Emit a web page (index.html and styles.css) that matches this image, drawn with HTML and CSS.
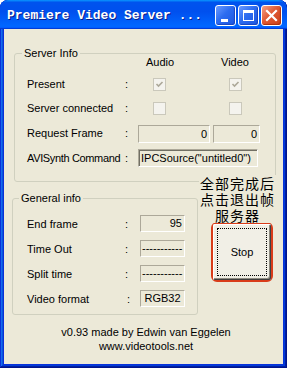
FILE: index.html
```html
<!DOCTYPE html>
<html lang="en">
  <head>
    <meta charset="UTF-8" />
    <meta name="viewport" content="width=device-width, initial-scale=1.0" />
    <title>Premiere Video Server</title>
    <link rel="stylesheet" href="styles.css">
  </head>
  <body>
    <div class="window">
      <div class="titlebar">
        <span class="title">Premiere Video Server ...</span>
        <span class="tbtn" id="tMin"><i></i></span>
        <span class="tbtn" id="tMax"><i></i></span>
        <span class="tbtn" id="tClose">
          <svg width="19" height="19" viewBox="0 0 19 19">
            <path d="M5 5 L14 14 M14 5 L5 14" stroke="#fff" stroke-width="2.2" stroke-linecap="square" />
          </svg>
        </span>
      </div>

      <div class="client">
        <div class="group" id="serverInfo">
          <span class="legend">Server Info</span>
          <div class="serverRows">
            <span></span><span></span>
            <span class="head">Audio</span><span class="head">Video</span>

            <span>Present</span><span>:</span>
            <span class="chk"><svg width="11" height="11" viewBox="0 0 11 11"><path d="M2.5 5 L4.5 7 L8.5 3" fill="none" stroke="#aca899" stroke-width="1.6" /></svg></span>
            <span class="chk"><svg width="11" height="11" viewBox="0 0 11 11"><path d="M2.5 5 L4.5 7 L8.5 3" fill="none" stroke="#aca899" stroke-width="1.6" /></svg></span>

            <span>Server connected</span><span>:</span>
            <span class="chk"></span><span class="chk"></span>

            <span>Request Frame</span><span>:</span>
            <span class="box num wideA">0</span><span class="box num wideB">0</span>

            <span class="tight">AVISynth Command</span><span>:</span>
            <span class="box cmd">IPCSource("untitled0")</span>
          </div>
        </div>

        <div class="lower">
          <div class="group" id="generalInfo">
            <span class="legend">General info</span>
            <div class="genRows">
              <span>End frame</span><span>:</span><span class="box num">95</span>
              <span>Time Out</span><span>:</span><span class="box dash">-----------</span>
              <span>Split time</span><span>:</span><span class="box dash">-----------</span>
              <span>Video format</span><span class="colon2">:</span><span class="box mid">RGB32</span>
            </div>
          </div>

          <div class="side">
            <p class="note">全部完成后<br>点击退出帧<br>服务器</p>
            <div class="mark"><button type="button" id="stop">Stop</button></div>
          </div>
        </div>

        <p class="credit">v0.93 made by Edwin van Eggelen<br>www.videotools.net</p>
      </div>
    </div>
  </body>
</html>
```

FILE: styles.css
```css
body {
  margin: 0;
  background-color: #fff;
  font-family: "Liberation Sans", Arial, sans-serif;
  font-size: 11px;
  color: #000;
}
.window {
  width: 287px;
  height: 368px;
  box-sizing: border-box;
  border-radius: 8px 8px 0 0;
  background-color: #0831d9;
  box-shadow: inset -1px -1px #00138c, inset 1px 1px #0831d9,
    inset -2px -2px #001ea0, inset 2px 2px #166aee,
    inset -3px -3px #003bda, inset 3px 3px #0855dd;
  overflow: hidden;
}
.titlebar {
  height: 29px;
  box-sizing: border-box;
  display: flex;
  align-items: flex-start;
  padding: 5px 5px 0 7px;
  background: linear-gradient(180deg, #0997ff, #0053ee 8%, #0050ee 40%,
    #0066ff 88%, #0066ff 93%, #005bff 95%, #003dd7 96%, #003dd7);
  border-radius: 8px 8px 0 0;
}
.title {
  flex: 1;
  line-height: 21px;
  font-family: "Liberation Mono", monospace;
  font-size: 13px;
  font-weight: bold;
  color: #fff;
  text-shadow: 1px 1px #0a1e8c;
  white-space: nowrap;
}
.tbtn {
  width: 21px;
  height: 21px;
  box-sizing: border-box;
  margin-left: 2px;
  border: 1px solid #fff;
  border-radius: 3px;
  background: linear-gradient(135deg, #6b9bff 0%, #2d6cf0 45%, #1d56e0 100%);
  box-shadow: inset -1px -1px 1px #1a45c0;
}
#tClose {
  background: linear-gradient(135deg, #f4a088 0%, #e05a34 45%, #c9401a 100%);
  box-shadow: inset -1px -1px 1px #a8300e;
}
#tMin i {
  display: block;
  width: 7px;
  height: 3px;
  margin: 13px 0 0 5px;
  background-color: #fff;
}
#tMax i {
  display: block;
  width: 9px;
  height: 7px;
  margin: 4px 0 0 4px;
  border: 1px solid #fff;
  border-top-width: 3px;
}
#tClose svg {
  display: block;
}

.client {
  height: 335px;
  margin: 0 4px;
  padding-top: 24px;
  box-sizing: border-box;
  background-color: #ece9d8;
}
.group {
  position: relative;
  box-sizing: border-box;
  border: 1px solid #d0d0bf;
  border-radius: 3px;
}
.legend {
  position: absolute;
  top: -7px;
  left: 7px;
  padding: 0 2px;
  line-height: 13px;
  background-color: #ece9d8;
}
#serverInfo {
  margin-left: 10px;
  width: 262px;
  height: 129px;
}
.serverRows {
  display: grid;
  grid-template-columns: 98px 13px 75px 47px;
  grid-template-rows: 15px 18px 18px 20px 18px;
  row-gap: 6px;
  padding-left: 12px;
  align-items: center;
  white-space: nowrap;
}
.tight {
  letter-spacing: -0.35px;
}
.head {
  width: 44px;
  text-align: center;
  color: #000;
}
.chk {
  width: 13px;
  height: 13px;
  box-sizing: border-box;
  margin-left: 15px;
  border: 1px solid #cac8bb;
  background-color: #f4f3ee;
}
.chk svg {
  display: block;
}
.serverRows .chk:nth-child(4n) {
  margin-left: 16px;
}
.box {
  height: 18px;
  box-sizing: border-box;
  line-height: 16px;
  border: 1px solid;
  border-color: #aca899 #fff #fff #aca899;
  white-space: nowrap;
  overflow: hidden;
}
.num {
  text-align: right;
  padding-right: 2px;
}
.wideA {
  width: 72px;
  align-self: end;
}
.wideB {
  width: 47px;
  align-self: end;
}
.cmd {
  grid-column: 3 / span 2;
  width: 120px;
  padding-left: 2px;
  box-shadow: inset 1px 1px #716f64;
}

.lower {
  display: flex;
  align-items: flex-start;
  margin-top: 16px;
}
#generalInfo {
  margin-left: 8px;
  width: 186px;
  height: 117px;
}
#generalInfo .legend {
  left: 6px;
}
.genRows {
  display: grid;
  grid-template-columns: 98px 15px 45px;
  grid-auto-rows: 17px;
  row-gap: 8px;
  padding: 16px 0 0 14px;
  align-items: center;
  white-space: nowrap;
}
.genRows .box {
  height: 17px;
  line-height: 15px;
}
.colon2 {
  padding-left: 2px;
}
.dash {
  padding-left: 1px;
}
.mid {
  text-align: center;
}

.side {
  width: 77px;
  margin-left: 1px;
}
.note {
  position: relative;
  margin: -23px 0 0;
  height: 48px;
  font-family: "Noto Sans CJK SC", sans-serif;
  font-size: 14px;
  letter-spacing: 1px;
  line-height: 16px;
  text-align: center;
  white-space: nowrap;
  background-color: #ece9d8;
}
.mark {
  width: 62px;
  height: 60px;
  box-sizing: border-box;
  margin: -1px 0 0 12px;
  border: 2px solid #d93c1a;
  border-radius: 6px;
}
#stop {
  display: block;
  width: 100%;
  height: 100%;
  padding: 0;
  border: 0;
  border-radius: 2px;
  background-color: #f1efe6;
  box-shadow: inset 1px 1px #fff, inset -1px -1px #404040,
    inset -2px -2px #8e8c82;
  outline: 1px dotted #000;
  outline-offset: -5px;
  font-family: "Liberation Sans", Arial, sans-serif;
  font-size: 11px;
  color: #000;
}
.credit {
  margin: 10px 0 0;
  padding-left: 5px;
  line-height: 14px;
  text-align: center;
}
```
